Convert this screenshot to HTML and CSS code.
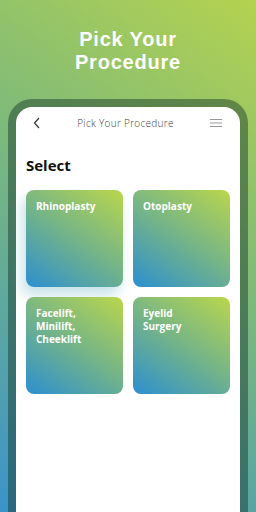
FILE: index.html
```html
<!DOCTYPE html>
<html>
<head>
  <title>Pick Your Procedure</title>
  <link rel="stylesheet" href="styles.css">
</head>
<body>
  <h1 class="headline"><span>Pick Your</span><span>Procedure</span></h1>

  <div class="phone">
    <div class="screen">
      <div class="topbar">
        <svg class="back" width="8" height="12" viewBox="0 0 8 12">
          <path d="M6 1 L1.5 6 L6 11" fill="none" stroke="#333" stroke-width="1.2"/>
        </svg>
        <span class="topbar-title">Pick Your Procedure</span>
        <svg class="menu" width="12" height="10" viewBox="0 0 12 10">
          <path d="M0 1.5 H12 M0 5 H12 M0 8.5 H12" stroke="#999" stroke-width="1.2"/>
        </svg>
      </div>

      <h2 class="section">Select</h2>

      <div class="grid">
        <div class="card card-glow">Rhinoplasty</div>
        <div class="card">Otoplasty</div>
        <div class="card">Facelift,<br>Minilift,<br>Cheeklift</div>
        <div class="card">Eyelid<br>Surgery</div>
      </div>
    </div>
  </div>
</body>
</html>
```

FILE: styles.css
```css
html, body {
  height: 100%;
}

body {
  margin: 0;
  font-family: "Open Sans", Arial, sans-serif;
  background: linear-gradient(215deg, #b4d24f 0%, #7cb97c 45%, #3a93c9 100%);
  overflow: hidden;
  display: flex;
  flex-direction: column;
  align-items: center;
}

.headline {
  margin: 28px 0 0;
  color: #fff;
  font-family: "Liberation Sans", Arial, sans-serif;
  font-weight: 700;
  font-size: 20px;
  line-height: 23px;
  text-align: center;
  letter-spacing: 0.8px;
  display: flex;
  flex-direction: column;
}

.phone {
  margin-top: 25px;
  width: 224px;
  flex: 1;
  padding: 8px 8px 0;
  border-radius: 24px 24px 0 0;
  background: rgba(20, 50, 40, 0.45);
}

.screen {
  height: 100%;
  background: #fff;
  border-radius: 16px 16px 0 0;
  padding: 0 10px;
}

.topbar {
  height: 32px;
  display: flex;
  align-items: center;
  justify-content: space-between;
  padding: 0 8px 0 7px;
}

.topbar-title {
  font-size: 10px;
  font-weight: 300;
  color: #444;
  letter-spacing: 0.3px;
}

.section {
  margin: 16px 0 0;
  font-size: 15px;
  font-weight: 700;
  color: #111;
  line-height: 20px;
}

.grid {
  margin-top: 15px;
  display: grid;
  grid-template-columns: 97px 97px;
  grid-auto-rows: 97px;
  gap: 10px;
}

.card {
  border-radius: 8px;
  background: linear-gradient(215deg, #bad64b 0%, #74b488 50%, #2c8fd0 100%);
  color: #fff;
  font-weight: 700;
  font-size: 10px;
  line-height: 13px;
  padding: 10px 10px;
}

.card-glow {
  box-shadow: -4px 8px 14px rgba(90, 170, 190, 0.35);
}
```
